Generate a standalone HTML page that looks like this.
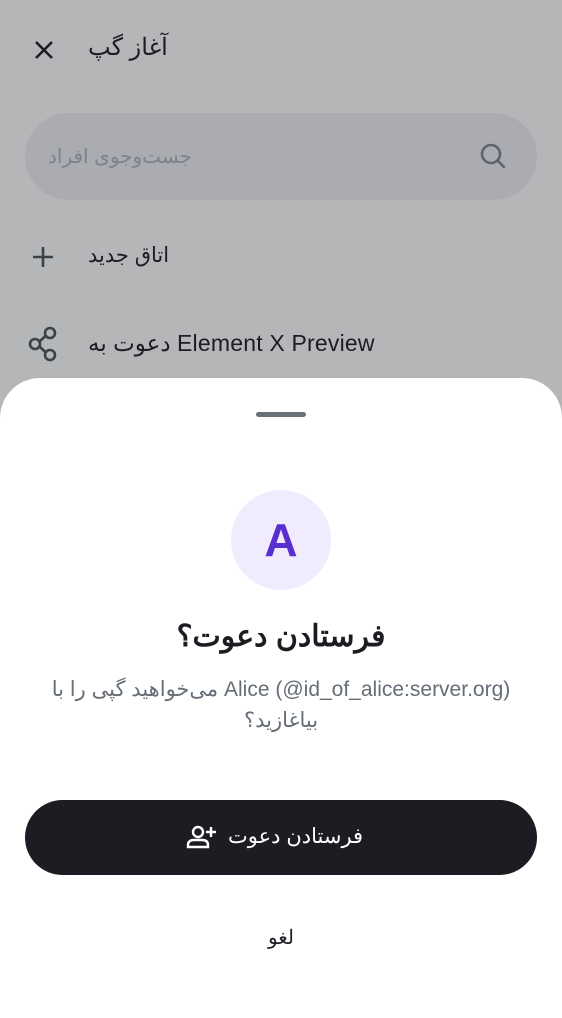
<!DOCTYPE html>
<html><head><meta charset="utf-8"><style>
*{margin:0;padding:0;box-sizing:border-box}
body{width:562px;height:1000px;overflow:hidden;background:#b5b6b8;font-family:"Liberation Sans","Noto Sans CJK SC",sans-serif;position:relative}
.a{position:absolute;white-space:nowrap}
</style></head><body>
<svg class="a" style="left:32px;top:38px" width="24" height="24" viewBox="0 0 24 24"><path d="M4 4L20 20M20 4L4 20" stroke="#1b1d22" stroke-width="2.6"/></svg>
<div class="a" style="left:88px;top:33px;font-size:24px;color:#1b1d22;direction:rtl">آغاز گپ</div>
<div class="a" style="left:25px;top:113px;width:512px;height:87px;border-radius:44px;background:#abacb1"></div>
<div class="a" style="left:48px;top:144px;font-size:20px;color:#7d828a;direction:rtl">جست‌وجوی افراد</div>
<svg class="a" style="left:477px;top:140px" width="32" height="32" viewBox="0 0 32 32"><circle cx="14" cy="14" r="9" fill="none" stroke="#5f646c" stroke-width="2.6"/><path d="M21 21L27 27" stroke="#5f646c" stroke-width="2.6" stroke-linecap="round"/></svg>
<svg class="a" style="left:30px;top:244px" width="26" height="26" viewBox="0 0 26 26"><path d="M13 3V23M3 13H23" stroke="#3d4148" stroke-width="2.6"/></svg>
<div class="a" style="left:88px;top:243px;font-size:21px;color:#1b1d22;direction:rtl">اتاق جدید</div>
<svg class="a" style="left:26px;top:326px" width="34" height="36" viewBox="0 0 34 36"><circle cx="24" cy="7" r="5" fill="none" stroke="#3d4148" stroke-width="2.6"/><circle cx="9" cy="18" r="5" fill="none" stroke="#3d4148" stroke-width="2.6"/><circle cx="24" cy="29" r="5" fill="none" stroke="#3d4148" stroke-width="2.6"/><path d="M13.5 15.5L19.5 10M13.5 20.5L19.5 26" stroke="#3d4148" stroke-width="2.6"/></svg>
<div class="a" style="left:88px;top:330px;font-size:23px;color:#1b1d22;letter-spacing:0.2px">دعوت به Element X Preview</div>
<div class="a" style="left:0;top:378px;width:562px;height:640px;background:#fff;border-radius:40px 40px 0 0"></div>
<div class="a" style="left:256px;top:412px;width:50px;height:5px;border-radius:3px;background:#6b6f76"></div>
<div class="a" style="left:231px;top:490px;width:100px;height:100px;border-radius:50%;background:#f0ebfd;color:#5a2fd1;font-weight:bold;font-size:46px;line-height:100px;text-align:center">A</div>
<div class="a" style="left:0;top:619px;width:562px;text-align:center;font-size:30px;font-weight:bold;color:#1b1d22">فرستادن دعوت؟</div>
<div class="a" style="left:0;top:677px;width:562px;text-align:center;font-size:21px;color:#656d77;direction:rtl">Alice (@id_of_alice:server.org) می‌خواهید گپی را با</div>
<div class="a" style="left:0;top:708px;width:562px;text-align:center;font-size:21px;color:#656d77;direction:rtl">بیاغازید؟</div>
<div class="a" style="left:25px;top:800px;width:512px;height:75px;border-radius:38px;background:#1b1d22"></div>
<svg class="a" style="left:186px;top:824px" width="32" height="26" viewBox="0 0 32 26"><circle cx="12" cy="8" r="5" fill="none" stroke="#fff" stroke-width="2.4"/><path d="M2 23V21Q2 16 8 16H16Q22 16 22 21V23Z" fill="none" stroke="#fff" stroke-width="2.4"/><path d="M25 3V13M20 8H30" stroke="#fff" stroke-width="2.4"/></svg>
<div class="a" style="left:228px;top:824px;font-size:21px;color:#fff;direction:rtl">فرستادن دعوت</div>
<div class="a" style="left:0;top:925px;width:562px;text-align:center;font-size:20px;color:#1b1d22">لغو</div>
</body></html>
